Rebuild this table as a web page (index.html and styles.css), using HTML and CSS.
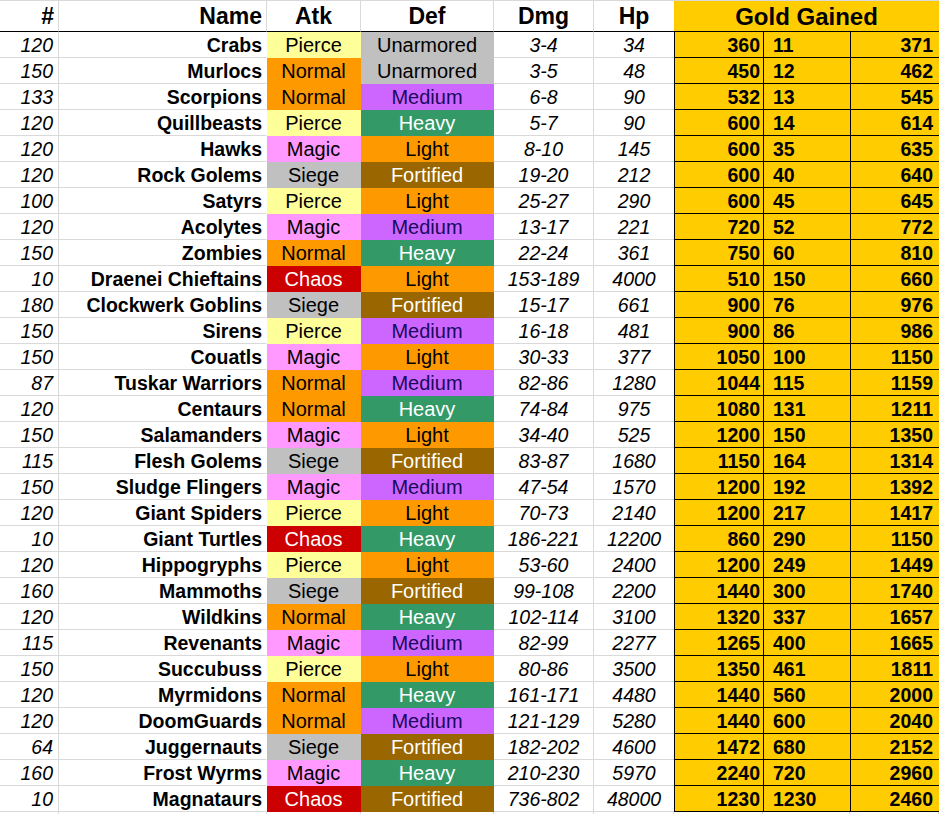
FILE: index.html
```html
<!DOCTYPE html>
<html>
<head>
<meta charset="utf-8">
<link rel="stylesheet" href="styles.css">
</head>
<body>
<div class="sheet">
  <div class="c hd num">#</div>
  <div class="c hd name">Name</div>
  <div class="c hd mid">Atk</div>
  <div class="c hd mid">Def</div>
  <div class="c hd mid">Dmg</div>
  <div class="c hd mid hp">Hp</div>
  <div class="c hd goldhead">Gold Gained</div>

  <div class="c num">120</div><div class="c name">Crabs</div><div class="c t pierce">Pierce</div><div class="c t unarmored">Unarmored</div><div class="c it">3-4</div><div class="c it hp">34</div><div class="c g g1">360</div><div class="c g g2">11</div><div class="c g g3">371</div>
  <div class="c num">150</div><div class="c name">Murlocs</div><div class="c t normal">Normal</div><div class="c t unarmored">Unarmored</div><div class="c it">3-5</div><div class="c it hp">48</div><div class="c g g1">450</div><div class="c g g2">12</div><div class="c g g3">462</div>
  <div class="c num">133</div><div class="c name">Scorpions</div><div class="c t normal">Normal</div><div class="c t medium">Medium</div><div class="c it">6-8</div><div class="c it hp">90</div><div class="c g g1">532</div><div class="c g g2">13</div><div class="c g g3">545</div>
  <div class="c num">120</div><div class="c name">Quillbeasts</div><div class="c t pierce">Pierce</div><div class="c t heavy">Heavy</div><div class="c it">5-7</div><div class="c it hp">90</div><div class="c g g1">600</div><div class="c g g2">14</div><div class="c g g3">614</div>
  <div class="c num">120</div><div class="c name">Hawks</div><div class="c t magic">Magic</div><div class="c t light">Light</div><div class="c it">8-10</div><div class="c it hp">145</div><div class="c g g1">600</div><div class="c g g2">35</div><div class="c g g3">635</div>
  <div class="c num">120</div><div class="c name">Rock Golems</div><div class="c t siege">Siege</div><div class="c t fortified">Fortified</div><div class="c it">19-20</div><div class="c it hp">212</div><div class="c g g1">600</div><div class="c g g2">40</div><div class="c g g3">640</div>
  <div class="c num">100</div><div class="c name">Satyrs</div><div class="c t pierce">Pierce</div><div class="c t light">Light</div><div class="c it">25-27</div><div class="c it hp">290</div><div class="c g g1">600</div><div class="c g g2">45</div><div class="c g g3">645</div>
  <div class="c num">120</div><div class="c name">Acolytes</div><div class="c t magic">Magic</div><div class="c t medium">Medium</div><div class="c it">13-17</div><div class="c it hp">221</div><div class="c g g1">720</div><div class="c g g2">52</div><div class="c g g3">772</div>
  <div class="c num">150</div><div class="c name">Zombies</div><div class="c t normal">Normal</div><div class="c t heavy">Heavy</div><div class="c it">22-24</div><div class="c it hp">361</div><div class="c g g1">750</div><div class="c g g2">60</div><div class="c g g3">810</div>
  <div class="c num">10</div><div class="c name">Draenei Chieftains</div><div class="c t chaos">Chaos</div><div class="c t light">Light</div><div class="c it">153-189</div><div class="c it hp">4000</div><div class="c g g1">510</div><div class="c g g2">150</div><div class="c g g3">660</div>
  <div class="c num">180</div><div class="c name">Clockwerk Goblins</div><div class="c t siege">Siege</div><div class="c t fortified">Fortified</div><div class="c it">15-17</div><div class="c it hp">661</div><div class="c g g1">900</div><div class="c g g2">76</div><div class="c g g3">976</div>
  <div class="c num">150</div><div class="c name">Sirens</div><div class="c t pierce">Pierce</div><div class="c t medium">Medium</div><div class="c it">16-18</div><div class="c it hp">481</div><div class="c g g1">900</div><div class="c g g2">86</div><div class="c g g3">986</div>
  <div class="c num">150</div><div class="c name">Couatls</div><div class="c t magic">Magic</div><div class="c t light">Light</div><div class="c it">30-33</div><div class="c it hp">377</div><div class="c g g1">1050</div><div class="c g g2">100</div><div class="c g g3">1150</div>
  <div class="c num">87</div><div class="c name">Tuskar Warriors</div><div class="c t normal">Normal</div><div class="c t medium">Medium</div><div class="c it">82-86</div><div class="c it hp">1280</div><div class="c g g1">1044</div><div class="c g g2">115</div><div class="c g g3">1159</div>
  <div class="c num">120</div><div class="c name">Centaurs</div><div class="c t normal">Normal</div><div class="c t heavy">Heavy</div><div class="c it">74-84</div><div class="c it hp">975</div><div class="c g g1">1080</div><div class="c g g2">131</div><div class="c g g3">1211</div>
  <div class="c num">150</div><div class="c name">Salamanders</div><div class="c t magic">Magic</div><div class="c t light">Light</div><div class="c it">34-40</div><div class="c it hp">525</div><div class="c g g1">1200</div><div class="c g g2">150</div><div class="c g g3">1350</div>
  <div class="c num">115</div><div class="c name">Flesh Golems</div><div class="c t siege">Siege</div><div class="c t fortified">Fortified</div><div class="c it">83-87</div><div class="c it hp">1680</div><div class="c g g1">1150</div><div class="c g g2">164</div><div class="c g g3">1314</div>
  <div class="c num">150</div><div class="c name">Sludge Flingers</div><div class="c t magic">Magic</div><div class="c t medium">Medium</div><div class="c it">47-54</div><div class="c it hp">1570</div><div class="c g g1">1200</div><div class="c g g2">192</div><div class="c g g3">1392</div>
  <div class="c num">120</div><div class="c name">Giant Spiders</div><div class="c t pierce">Pierce</div><div class="c t light">Light</div><div class="c it">70-73</div><div class="c it hp">2140</div><div class="c g g1">1200</div><div class="c g g2">217</div><div class="c g g3">1417</div>
  <div class="c num">10</div><div class="c name">Giant Turtles</div><div class="c t chaos">Chaos</div><div class="c t heavy">Heavy</div><div class="c it">186-221</div><div class="c it hp">12200</div><div class="c g g1">860</div><div class="c g g2">290</div><div class="c g g3">1150</div>
  <div class="c num">120</div><div class="c name">Hippogryphs</div><div class="c t pierce">Pierce</div><div class="c t light">Light</div><div class="c it">53-60</div><div class="c it hp">2400</div><div class="c g g1">1200</div><div class="c g g2">249</div><div class="c g g3">1449</div>
  <div class="c num">160</div><div class="c name">Mammoths</div><div class="c t siege">Siege</div><div class="c t fortified">Fortified</div><div class="c it">99-108</div><div class="c it hp">2200</div><div class="c g g1">1440</div><div class="c g g2">300</div><div class="c g g3">1740</div>
  <div class="c num">120</div><div class="c name">Wildkins</div><div class="c t normal">Normal</div><div class="c t heavy">Heavy</div><div class="c it">102-114</div><div class="c it hp">3100</div><div class="c g g1">1320</div><div class="c g g2">337</div><div class="c g g3">1657</div>
  <div class="c num">115</div><div class="c name">Revenants</div><div class="c t magic">Magic</div><div class="c t medium">Medium</div><div class="c it">82-99</div><div class="c it hp">2277</div><div class="c g g1">1265</div><div class="c g g2">400</div><div class="c g g3">1665</div>
  <div class="c num">150</div><div class="c name">Succubuss</div><div class="c t pierce">Pierce</div><div class="c t light">Light</div><div class="c it">80-86</div><div class="c it hp">3500</div><div class="c g g1">1350</div><div class="c g g2">461</div><div class="c g g3">1811</div>
  <div class="c num">120</div><div class="c name">Myrmidons</div><div class="c t normal">Normal</div><div class="c t heavy">Heavy</div><div class="c it">161-171</div><div class="c it hp">4480</div><div class="c g g1">1440</div><div class="c g g2">560</div><div class="c g g3">2000</div>
  <div class="c num">120</div><div class="c name">DoomGuards</div><div class="c t normal">Normal</div><div class="c t medium">Medium</div><div class="c it">121-129</div><div class="c it hp">5280</div><div class="c g g1">1440</div><div class="c g g2">600</div><div class="c g g3">2040</div>
  <div class="c num">64</div><div class="c name">Juggernauts</div><div class="c t siege">Siege</div><div class="c t fortified">Fortified</div><div class="c it">182-202</div><div class="c it hp">4600</div><div class="c g g1">1472</div><div class="c g g2">680</div><div class="c g g3">2152</div>
  <div class="c num">160</div><div class="c name">Frost Wyrms</div><div class="c t magic">Magic</div><div class="c t heavy">Heavy</div><div class="c it">210-230</div><div class="c it hp">5970</div><div class="c g g1">2240</div><div class="c g g2">720</div><div class="c g g3">2960</div>
  <div class="c num">10</div><div class="c name">Magnataurs</div><div class="c t chaos">Chaos</div><div class="c t fortified">Fortified</div><div class="c it">736-802</div><div class="c it hp">48000</div><div class="c g g1">1230</div><div class="c g g2">1230</div><div class="c g g3">2460</div>

  <div class="c e"></div><div class="c e"></div><div class="c e"></div><div class="c e"></div><div class="c e"></div><div class="c e"></div><div class="c e"></div><div class="c e"></div><div class="c e"></div>
</div>
</body>
</html>
```

FILE: styles.css
```css
html, body {
  margin: 0;
  padding: 0;
  background: #fff;
}
body {
  width: 939px;
  height: 814px;
  overflow: hidden;
  font-family: "Liberation Sans", Arial, sans-serif;
  font-size: 19.5px;
  color: #000;
}
.sheet {
  display: grid;
  grid-template-columns: 59px 208px 94px 133px 100px 80px 89px 87px 89px;
  grid-template-rows: 32px repeat(30, 26px) 10px;
}
.c {
  box-sizing: border-box;
  border-right: 1px solid #d9d9d9;
  border-bottom: 1px solid #d9d9d9;
  display: flex;
  align-items: center;
  justify-content: center;
  white-space: nowrap;
  overflow: hidden;
  padding-top: 1px;
}
.hd {
  border-top: 1px solid #d9d9d9;
  border-bottom: 1px solid #000;
  font-weight: bold;
  font-size: 23px;
}
.num {
  justify-content: flex-end;
  padding-right: 5px;
  font-style: italic;
}
.hd.num {
  font-style: normal;
  padding-right: 4px;
}
.name {
  justify-content: flex-end;
  padding-right: 4px;
  font-weight: bold;
  border-right-color: #fff;
}
.hd.name {
  border-right-color: #d9d9d9;
}
.hp {
  border-right: none;
}
.it {
  font-style: italic;
}
.goldhead {
  grid-column: span 3;
  background: #ffcc00;
  border-right: none;
  font-size: 24px;
}
.t { font-size: 20px; }
.pierce { background: #ffff99; border-color: #ffff99; }
.normal { background: #ff9900; border-color: #ff9900; }
.magic { background: #ff99ff; border-color: #ff99ff; }
.siege { background: #c0c0c0; border-color: #c0c0c0; }
.chaos { background: #cc0000; border-color: #cc0000; color: #fff; }
.unarmored { background: #c0c0c0; border-color: #c0c0c0; }
.medium { background: #cc66ff; border-color: #cc66ff; color: #1a0a5c; }
.heavy { background: #339966; border-color: #339966; color: #fff; }
.light { background: #ff9900; border-color: #ff9900; }
.fortified { background: #996600; border-color: #996600; color: #fff; }
.g {
  background: #ffcc00;
  border-left: 1px solid #000;
  border-right: none;
  border-bottom: 1px solid #000;
  font-weight: bold;
}
.g1 { justify-content: flex-end; padding-right: 3px; }
.g2 { justify-content: flex-start; padding-left: 9px; }
.g3 { justify-content: flex-end; padding-right: 6px; }
.e {
  border-bottom: none;
}
```
